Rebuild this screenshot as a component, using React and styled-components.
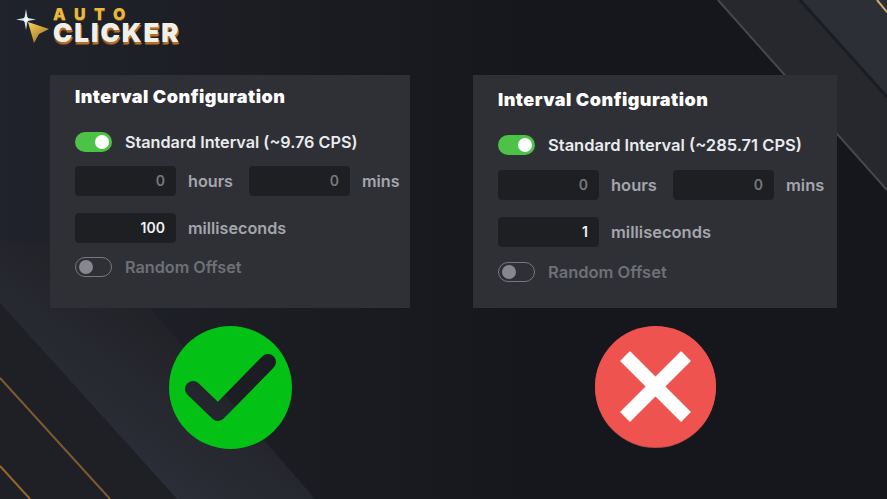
import React from 'react';
import styled, {createGlobalStyle} from 'styled-components';

const panels = [
    {cps: '9.76', ms: '100', top: 12, titleGap: 25, toggleGap: 14, rowGap: 17, width: 360, hoursWidth: 73, textSize: 16.2, badge: 'ok'},
    {cps: '285.71', ms: '1', top: 15, titleGap: 25, toggleGap: 15, rowGap: 17, width: 364, hoursWidth: 74, textSize: 16.5, badge: 'no'},
];

const Background = () => (
    <BackgroundArt viewBox="0 0 887 499">
        <defs>
            <linearGradient id="page" x1="0" y1="0" x2="1" y2="0">
                <stop offset="0" stopColor="#20232b" />
                <stop offset="0.3" stopColor="#1c1d23" />
                <stop offset="0.6" stopColor="#16171c" />
                <stop offset="1" stopColor="#16171c" />
            </linearGradient>
            <linearGradient id="bandLeft" x1="0.25" y1="0.75" x2="0.6" y2="0.35">
                <stop offset="0" stopColor="#2c2e38" />
                <stop offset="1" stopColor="#212227" />
            </linearGradient>
        </defs>
        <rect width="887" height="499" fill="url(#page)" />

        <polygon points="0,240 96,245 150,308 315,499 177,499 0,303" fill="url(#bandLeft)" />
        <polygon points="0,303 177,499 0,499" fill="#1f2025" />
        <line x1="0" y1="378" x2="110" y2="499" stroke="#7d5a30" strokeWidth="2" />
        <line x1="0" y1="466" x2="30" y2="499" stroke="#96662f" strokeWidth="2" />

        <polygon points="718,0 800,0 887,97 887,190" fill="#27282d" />
        <polygon points="800,0 887,0 887,97" fill="#2d2f36" />
        <line x1="718" y1="0" x2="887" y2="190" stroke="#48484a" strokeWidth="2" />
        <line x1="800" y1="0" x2="887" y2="97" stroke="#1b1d20" strokeWidth="3" />
        <line x1="877" y1="0" x2="887" y2="12" stroke="#c9ad6a" strokeWidth="2" />
    </BackgroundArt>
);

const LogoMark = () => (
    <LogoArt width="36" height="38" viewBox="0 0 36 38">
        <defs>
            <linearGradient id="cursorGold" x1="0" y1="0" x2="0.7" y2="1">
                <stop offset="0" stopColor="#f6d463" />
                <stop offset="1" stopColor="#a8701c" />
            </linearGradient>
        </defs>
        <path d="M10 0 L11.6 9 L20 10.5 L11.6 12 L10 21 L8.4 12 L0 10.5 L8.4 9 Z" fill="#cfe4f2" />
        <circle cx="10" cy="10.5" r="2.5" fill="#f4fafd" />
        <path d="M12 13 L33 20 L23 25 L18 34 Z" fill="url(#cursorGold)" />
    </LogoArt>
);

const Check = () => (
    <svg width="123" height="123" viewBox="0 0 123 123">
        <mask id="checkCut">
            <rect width="123" height="123" fill="#fff" />
            <path d="M24 63 L49 87 L99 36" fill="none" stroke="#000" strokeWidth="16" strokeLinecap="round" strokeLinejoin="round" />
        </mask>
        <circle cx="61.5" cy="61.5" r="61.5" fill="#04c116" mask="url(#checkCut)" />
    </svg>
);

const Cross = () => (
    <svg width="121" height="123" viewBox="0 0 121 123">
        <circle cx="60.5" cy="61.5" r="60.5" fill="#c04a44" />
        <circle cx="60.5" cy="60.5" r="60.5" fill="#ef5350" />
        <path d="M30 30 L91 91 M91 30 L30 91" stroke="#fff" strokeWidth="14" />
    </svg>
);

const ConfigPanel = ({panel}) => (
    <Panel $top={panel.top} $textSize={panel.textSize}>
        <PanelTitle $gap={panel.titleGap}>Interval Configuration</PanelTitle>
        <ToggleRow $gap={panel.toggleGap}>
            <Switch $on><Knob $on /></Switch>
            <ToggleLabel $on>Standard Interval (~{panel.cps} CPS)</ToggleLabel>
        </ToggleRow>
        <FieldRow $gap={panel.rowGap} $hoursWidth={panel.hoursWidth}>
            <Field>0</Field>
            <Unit>hours</Unit>
            <Field>0</Field>
            <Unit>mins</Unit>
        </FieldRow>
        <FieldRow $gap={panel.toggleGap} $hoursWidth={panel.hoursWidth}>
            <Field $active>{panel.ms}</Field>
            <Unit>milliseconds</Unit>
        </FieldRow>
        <ToggleRow>
            <Switch><Knob /></Switch>
            <ToggleLabel>Random Offset</ToggleLabel>
        </ToggleRow>
    </Panel>
);

const App = () => {
    return (
        <>
            <GlobalStyle />
            <Page>
                <Background />
                <Header>
                    <LogoMark />
                    <LogoText>
                        <LogoAuto>AUTO</LogoAuto>
                        <LogoClicker>CLICKER</LogoClicker>
                    </LogoText>
                </Header>
                <Columns>
                    {panels.map(panel => (
                        <Column key={panel.cps} $width={panel.width}>
                            <ConfigPanel panel={panel} />
                            {panel.badge === 'ok' ? <Check /> : <Cross />}
                        </Column>
                    ))}
                </Columns>
            </Page>
        </>
    );
};

const GlobalStyle = createGlobalStyle`
    html, body {
        margin: 0;
        padding: 0;
        background: #16171c;
    }
`;

const Page = styled.div`
    position: relative;
    width: 887px;
    height: 499px;
    overflow: hidden;
    font-family: Inter, "Liberation Sans", sans-serif;
`;

const BackgroundArt = styled.svg`
    position: absolute;
    inset: 0;
    width: 887px;
    height: 499px;
`;

const Header = styled.header`
    position: relative;
    display: flex;
    gap: 1px;
    height: 75px;
    padding: 8px 0 0 16px;
    box-sizing: border-box;
`;

const LogoArt = styled.svg`
    margin-top: 1px;
`;

const LogoText = styled.div`
    display: flex;
    flex-direction: column;
`;

const LogoAuto = styled.span`
    font-size: 16px;
    line-height: 13px;
    font-weight: 900;
    letter-spacing: 8.5px;
    color: #e8b93c;
    text-shadow: 0 1px 0 #7a5418;
`;

const LogoClicker = styled.span`
    font-size: 26px;
    line-height: 23px;
    font-weight: 900;
    letter-spacing: 1.9px;
    color: #f1efea;
    text-shadow: 1px 2px 0 #b5712a, 0 3px 0 #7a4a1c;
`;

const Columns = styled.main`
    position: relative;
    display: flex;
    gap: 63px;
    padding-left: 50px;
`;

const Column = styled.section`
    display: flex;
    flex-direction: column;
    align-items: center;
    gap: 18px;
    width: ${p => p.$width}px;
`;

const Panel = styled.div`
    width: 100%;
    height: 233px;
    box-sizing: border-box;
    padding: ${p => p.$top}px 0 0 25px;
    background: #2f3035;
    font-size: ${p => p.$textSize}px;
`;

const PanelTitle = styled.h2`
    margin: 0 0 ${p => p.$gap}px;
    font-size: 18px;
    line-height: 20px;
    font-weight: 900;
    letter-spacing: 0.46px;
    color: #fff;
`;

const ToggleRow = styled.div`
    display: flex;
    align-items: center;
    gap: 13px;
    height: 20px;
    margin-bottom: ${p => p.$gap || 0}px;
`;

const Switch = styled.div`
    display: flex;
    align-items: center;
    justify-content: ${p => (p.$on ? 'flex-end' : 'flex-start')};
    width: 37px;
    height: 20px;
    box-sizing: border-box;
    padding: 0 3px;
    border-radius: 10px;
    background: ${p => (p.$on ? '#4cc246' : 'transparent')};
    border: ${p => (p.$on ? 'none' : '1px solid #77787e')};
`;

const Knob = styled.div`
    width: 14px;
    height: 14px;
    border-radius: 50%;
    background: ${p => (p.$on ? '#fff' : '#86878f')};
`;

const ToggleLabel = styled.span`
    font-weight: 600;
    color: ${p => (p.$on ? '#e9ebee' : '#6e7077')};
`;

const FieldRow = styled.div`
    display: grid;
    grid-template-columns: 101px ${p => p.$hoursWidth}px 101px auto;
    align-items: center;
    height: 30px;
    margin-bottom: ${p => p.$gap}px;
`;

const Field = styled.div`
    height: 30px;
    box-sizing: border-box;
    padding-right: 11px;
    border-radius: 4px;
    background: #1e1f23;
    text-align: right;
    font-size: 14px;
    line-height: 30px;
    font-weight: 600;
    color: ${p => (p.$active ? '#f1f2f4' : '#77787d')};
`;

const Unit = styled.span`
    padding-left: 12px;
    font-weight: 600;
    white-space: nowrap;
    color: #a4a6ad;
`;

export default App;
